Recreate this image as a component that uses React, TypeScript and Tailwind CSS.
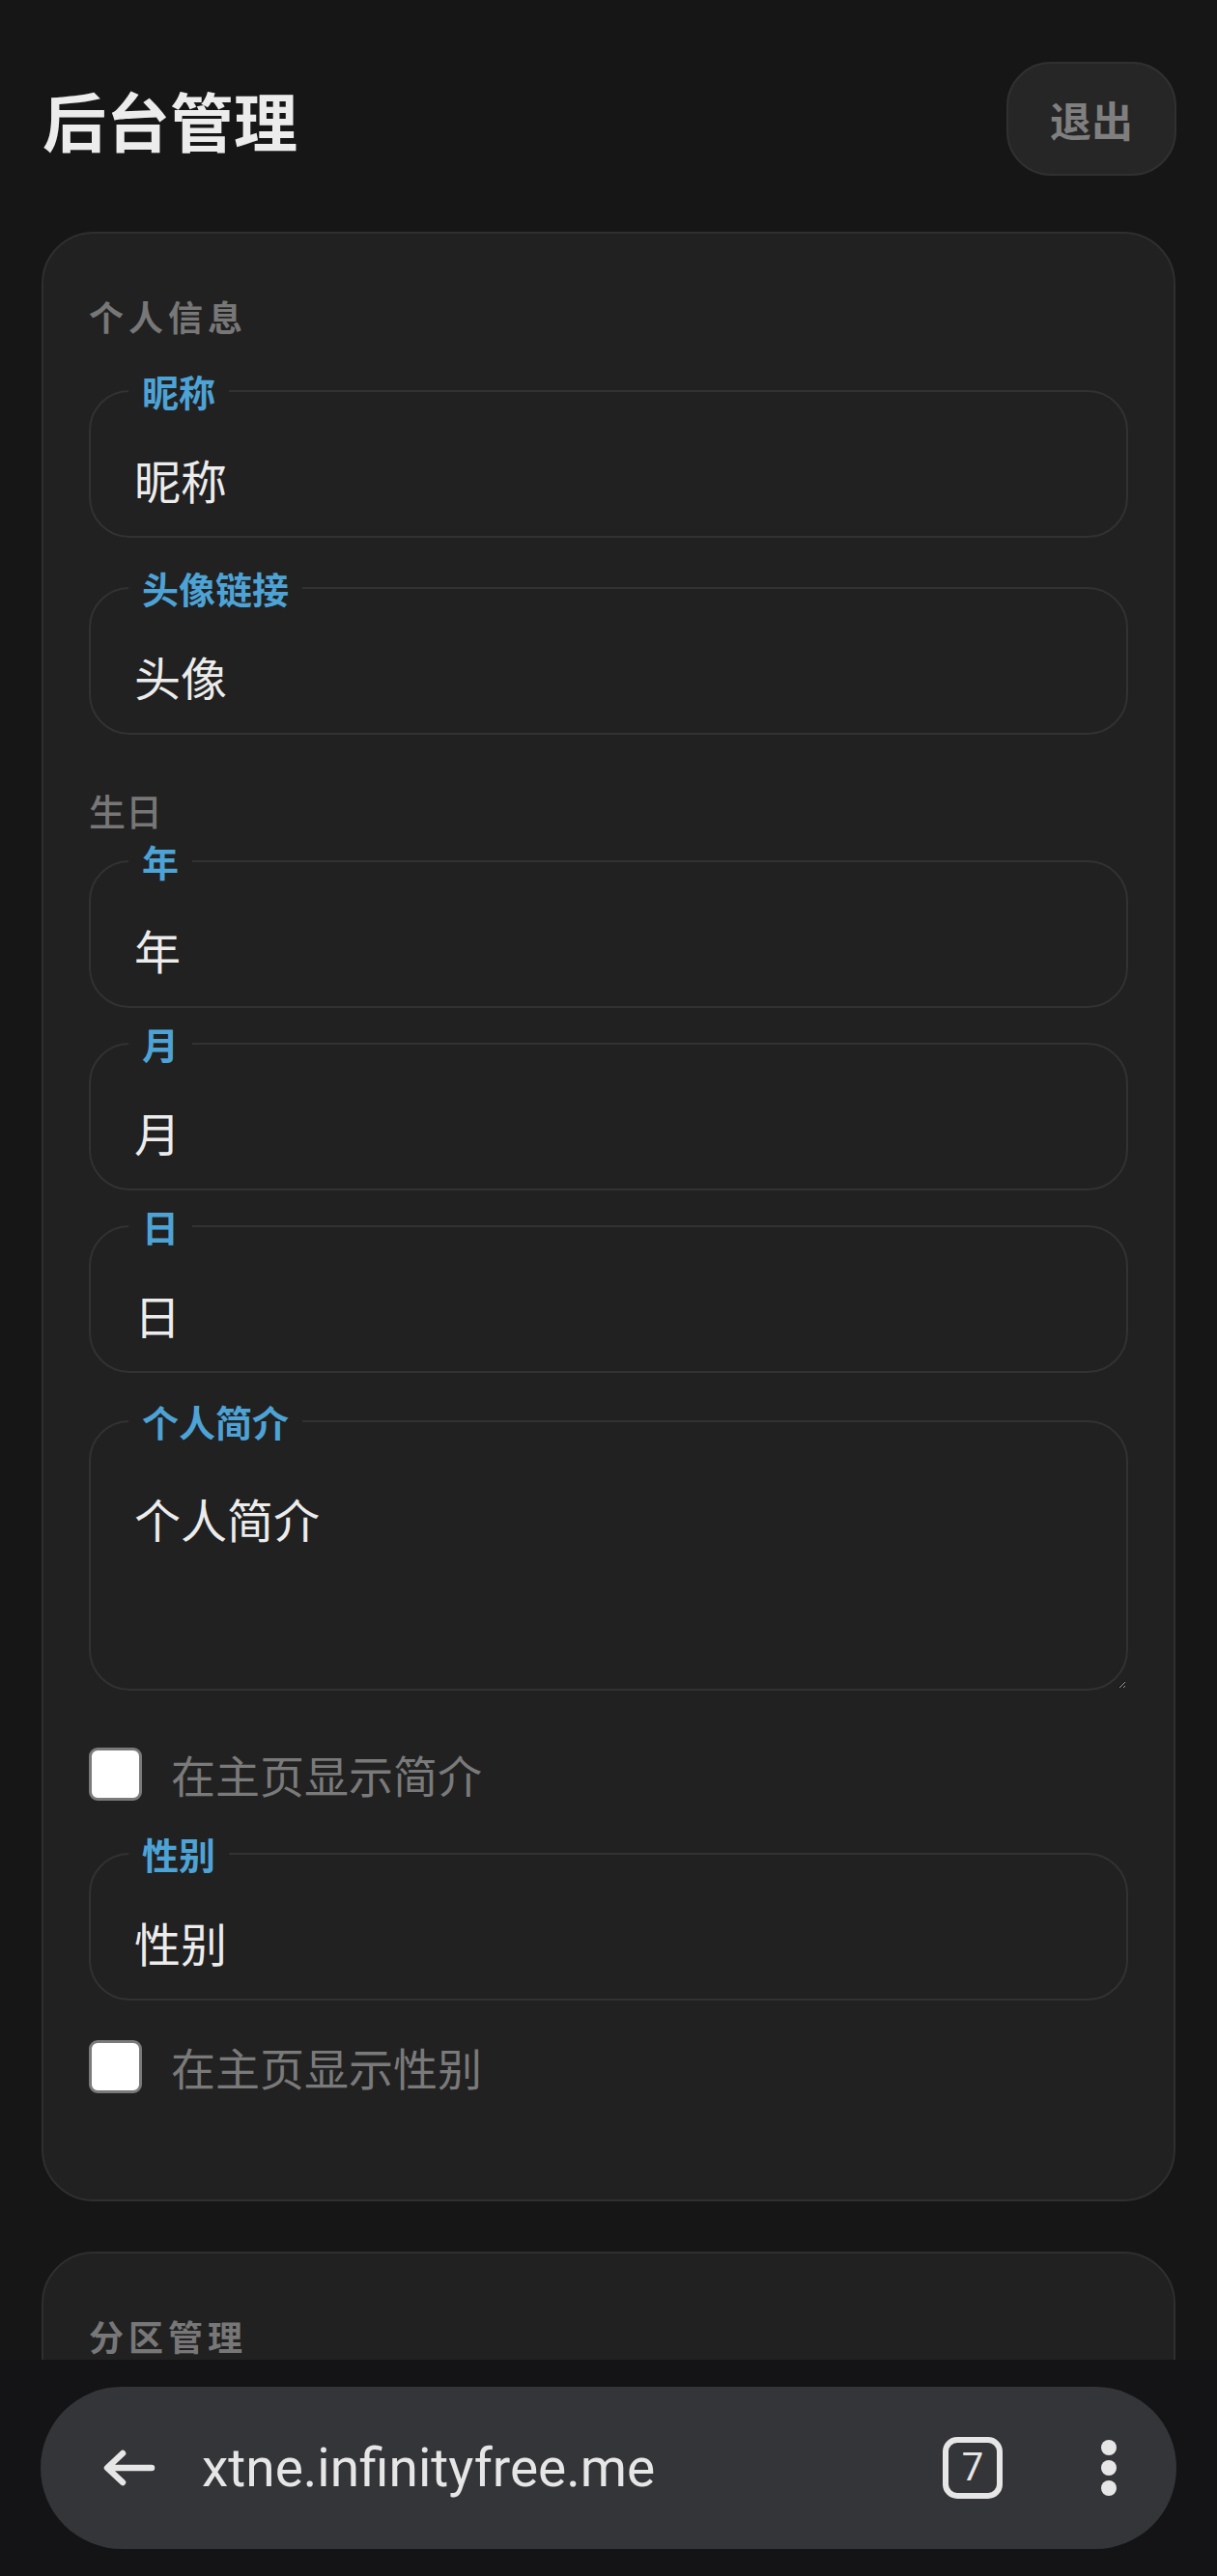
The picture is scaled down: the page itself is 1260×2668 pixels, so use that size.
import React from "react";

const cjk = "font-['Noto_Sans_CJK_SC','Noto_Sans',sans-serif]";

type FieldProps = {
  label: string;
  value: string;
  className?: string;
  multiline?: boolean;
};

const Field = ({ label, value, className, multiline }: FieldProps) => {
  return (
    <fieldset
      className={`rounded-[42px] border-2 border-[#323232] ${className ?? ""}`}
    >
      <legend className="ml-[39px] px-[14px] text-[38px] font-bold leading-[44px] text-[#4ea3d6]">
        {label}
      </legend>
      {multiline ? (
        <textarea
          defaultValue={value}
          className="block h-[255px] w-full bg-transparent pl-[45px] pt-[42px] text-[48px] leading-[72px] text-[#ececec] outline-none"
        />
      ) : (
        <input
          defaultValue={value}
          className="block h-[128px] w-full bg-transparent pl-[45px] pt-[10px] text-[48px] text-[#ececec] outline-none"
        />
      )}
    </fieldset>
  );
};

const CheckRow = ({ label, className }: { label: string; className?: string }) => (
  <label className={`flex items-center gap-[30px] ${className ?? ""}`}>
    <span className="h-[55px] w-[55px] shrink-0 rounded-[9px] border-[3px] border-[#7a7a7a] bg-white" />
    <span className="text-[46px] leading-[55px] text-[#7a7a7a]">{label}</span>
  </label>
);

const SectionTitle = ({ children }: { children: React.ReactNode }) => (
  <h2 className="text-[36px] font-bold leading-[36px] tracking-[5px] text-[#777777]">
    {children}
  </h2>
);

export default function App() {
  return (
    <div className={`min-h-screen bg-[#161616] pb-[300px] ${cjk}`}>
      <header className="flex items-center justify-between pb-[58px] pl-[44px] pr-[42px] pt-[64px]">
        <h1 className="text-[66px] font-bold leading-[118px] text-[#ececec]">后台管理</h1>
        <button className="flex h-[118px] w-[176px] items-center justify-center rounded-[46px] border-2 border-[#303030] bg-[#262626] text-[43px] font-bold text-[#7f7f7f]">
          退出
        </button>
      </header>

      <main className="flex flex-col gap-[52px] px-[43px]">
        <section className="rounded-[54px] border-2 border-[#2f2f2f] bg-[#212121] px-[47px] pb-[110px] pt-[67px]">
          <SectionTitle>个人信息</SectionTitle>
          <Field label="昵称" value="昵称" className="mt-[38px]" />
          <Field label="头像链接" value="头像" className="mt-[30px]" />

          <div className="mt-[59px] text-[38px] font-medium leading-[38px] text-[#777777]">生日</div>
          <Field label="年" value="年" className="mt-[12px]" />
          <Field label="月" value="月" className="mt-[15px]" />
          <Field label="日" value="日" className="mt-[15px]" />

          <Field label="个人简介" value="个人简介" multiline className="mt-[28px]" />
          <CheckRow label="在主页显示简介" className="mt-[59px]" />

          <Field label="性别" value="性别" className="mt-[33px]" />
          <CheckRow label="在主页显示性别" className="mt-[41px]" />
        </section>

        <section className="h-[600px] rounded-[54px] border-2 border-[#2f2f2f] bg-[#212121] px-[47px] pt-[67px]">
          <SectionTitle>分区管理</SectionTitle>
        </section>
      </main>

      <div className="fixed inset-x-0 bottom-0 h-[224px] bg-[#141416] px-[42px] pt-[28px]">
        <div className="flex h-[168px] items-center rounded-full bg-[#343538] pl-[64px] pr-[62px]">
          <svg width="55" height="38" viewBox="0 0 55 38" fill="none">
            <path
              d="M51 19H6M21 4L5 19l16 15"
              stroke="#e6e6e6"
              strokeWidth="6.5"
              strokeLinecap="round"
              strokeLinejoin="round"
            />
          </svg>
          <span className="ml-[48px] flex-1 font-['Roboto',sans-serif] text-[55px] leading-none text-[#e6e6e6]">
            xtne.infinityfree.me
          </span>
          <div className="flex h-[64px] w-[62px] items-center justify-center rounded-[15px] border-[6px] border-[#e6e6e6] font-['Roboto',sans-serif] text-[40px] leading-none text-[#e6e6e6]">
            7
          </div>
          <div className="ml-[102px] flex flex-col gap-[5px]">
            <span className="h-[16px] w-[16px] rounded-full bg-[#e6e6e6]" />
            <span className="h-[16px] w-[16px] rounded-full bg-[#e6e6e6]" />
            <span className="h-[16px] w-[16px] rounded-full bg-[#e6e6e6]" />
          </div>
        </div>
      </div>
    </div>
  );
}
